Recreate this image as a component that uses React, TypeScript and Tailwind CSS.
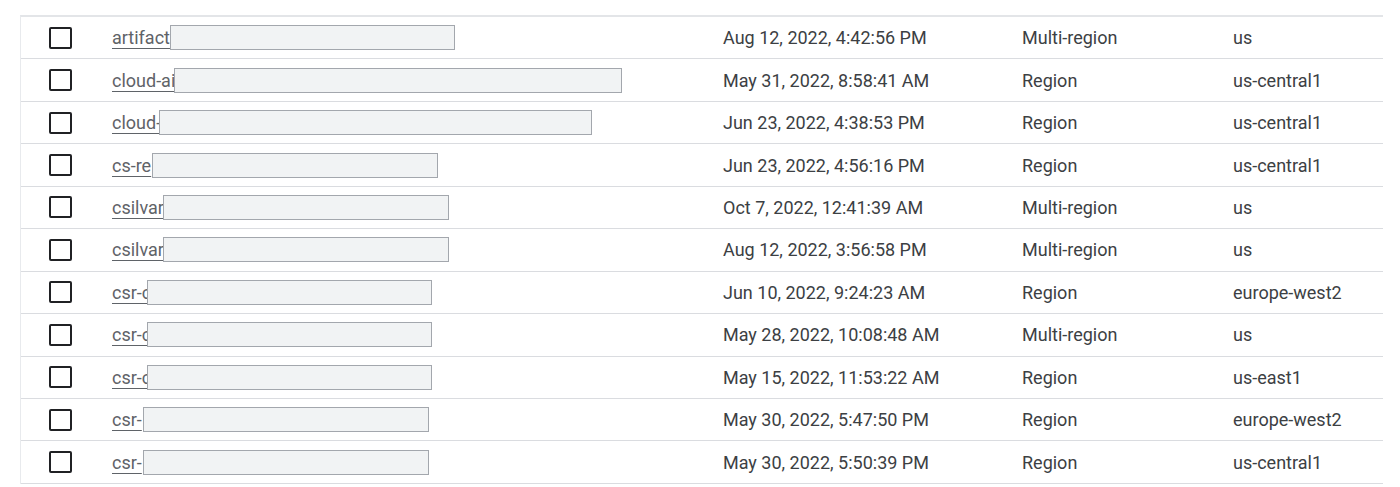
import React from 'react';

interface Bucket {
  prefix: string;
  maskStart: number;
  maskEnd: number;
  created: string;
  locationType: string;
  location: string;
}

// redaction boxes are measured in page pixels from the left edge
const buckets: Bucket[] = [
  { prefix: 'artifact', maskStart: 170, maskEnd: 455, created: 'Aug 12, 2022, 4:42:56 PM', locationType: 'Multi-region', location: 'us' },
  { prefix: 'cloud-ai', maskStart: 174, maskEnd: 622, created: 'May 31, 2022, 8:58:41 AM', locationType: 'Region', location: 'us-central1' },
  { prefix: 'cloud-', maskStart: 159, maskEnd: 592, created: 'Jun 23, 2022, 4:38:53 PM', locationType: 'Region', location: 'us-central1' },
  { prefix: 'cs-re', maskStart: 152, maskEnd: 438, created: 'Jun 23, 2022, 4:56:16 PM', locationType: 'Region', location: 'us-central1' },
  { prefix: 'csilvar', maskStart: 163, maskEnd: 449, created: 'Oct 7, 2022, 12:41:39 AM', locationType: 'Multi-region', location: 'us' },
  { prefix: 'csilvar', maskStart: 163, maskEnd: 449, created: 'Aug 12, 2022, 3:56:58 PM', locationType: 'Multi-region', location: 'us' },
  { prefix: 'csr-c', maskStart: 147, maskEnd: 432, created: 'Jun 10, 2022, 9:24:23 AM', locationType: 'Region', location: 'europe-west2' },
  { prefix: 'csr-c', maskStart: 147, maskEnd: 432, created: 'May 28, 2022, 10:08:48 AM', locationType: 'Multi-region', location: 'us' },
  { prefix: 'csr-c', maskStart: 147, maskEnd: 432, created: 'May 15, 2022, 11:53:22 AM', locationType: 'Region', location: 'us-east1' },
  { prefix: 'csr-', maskStart: 143, maskEnd: 429, created: 'May 30, 2022, 5:47:50 PM', locationType: 'Region', location: 'europe-west2' },
  { prefix: 'csr-', maskStart: 143, maskEnd: 429, created: 'May 30, 2022, 5:50:39 PM', locationType: 'Region', location: 'us-central1' },
];

const Row: React.FC<{ bucket: Bucket }> = ({ bucket }) => {
  return (
    <div className="grid grid-cols-[91px_611px_299px_211px_1fr] items-center h-[42.45px] border-b border-[#dadce0]">
      <div className="pl-[28px]">
        <div className="w-[23px] h-[22px] border-2 border-[#202124] rounded-[2px]" />
      </div>
      <div className="flex items-center">
        {/* name is partly hidden behind the redaction box */}
        <span
          className="text-[#5f6368] underline decoration-[#5f6368] underline-offset-[4px] whitespace-nowrap overflow-hidden shrink-0"
          style={{ width: bucket.maskStart - 112 }}
        >
          {bucket.prefix}
        </span>
        <span
          className="block h-[25px] bg-[#f1f3f4] border border-[#a3a7ad] shrink-0"
          style={{ width: bucket.maskEnd - bucket.maskStart }}
        />
      </div>
      <div>{bucket.created}</div>
      <div>{bucket.locationType}</div>
      <div>{bucket.location}</div>
    </div>
  );
};

export default function App() {
  return (
    <div className="w-[1400px] h-[487px] bg-white overflow-hidden pt-[15px] pl-[20px] font-['Roboto',sans-serif] text-[18px] text-[#3c4043]">
      <div className="w-[1363px] border-l border-[#e8eaed] border-t-2 border-t-[#e3e5e8]">
        {buckets.map((b, i) => (
          <Row key={i} bucket={b} />
        ))}
      </div>
    </div>
  );
}
